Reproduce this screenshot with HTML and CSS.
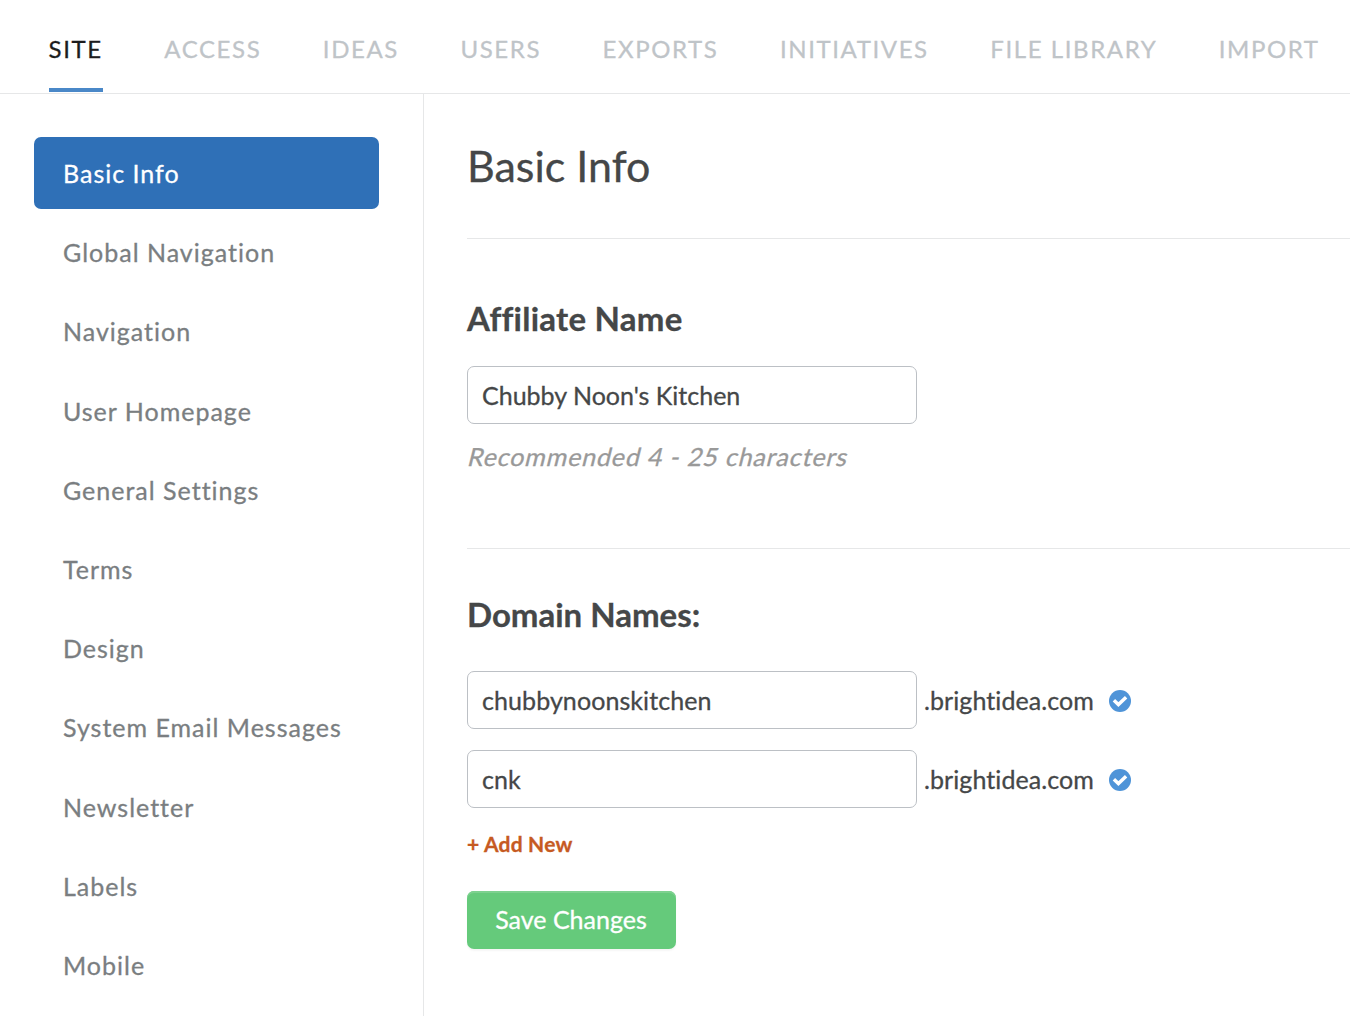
FILE: index.html
```html
<!DOCTYPE html>
<html lang="en">
<head>
<meta charset="utf-8">
<title>Basic Info</title>
<link rel="stylesheet" href="styles.css">
</head>
<body>
<nav class="tabs">
<a class="tab active">SITE</a>
<a class="tab">ACCESS</a>
<a class="tab">IDEAS</a>
<a class="tab">USERS</a>
<a class="tab">EXPORTS</a>
<a class="tab">INITIATIVES</a>
<a class="tab">FILE LIBRARY</a>
<a class="tab">IMPORT</a>
</nav>
<div class="body">
<aside class="side">
<a class="item current">Basic Info</a>
<a class="item">Global Navigation</a>
<a class="item">Navigation</a>
<a class="item">User Homepage</a>
<a class="item">General Settings</a>
<a class="item">Terms</a>
<a class="item">Design</a>
<a class="item">System Email Messages</a>
<a class="item">Newsletter</a>
<a class="item">Labels</a>
<a class="item">Mobile</a>
</aside>
<main class="main">
<h1 class="title">Basic Info</h1>
<section class="section affiliate">
<h2 class="heading">Affiliate Name</h2>
<input class="field" type="text" value="Chubby Noon's Kitchen">
<p class="hint">Recommended 4 - 25 characters</p>
</section>
<section class="section domains">
<h2 class="heading">Domain Names:</h2>
<div class="row">
<input class="field domain" type="text" value="chubbynoonskitchen">
<span class="suffix">.brightidea.com</span>
<svg class="check" viewBox="0 0 22 22"><circle cx="11" cy="11" r="11" fill="#4f94d8"/><path d="M4.9 10.3 9.4 14.6 17.1 7.2" fill="none" stroke="#fff" stroke-width="3.4"/></svg>
</div>
<div class="row">
<input class="field domain" type="text" value="cnk">
<span class="suffix">.brightidea.com</span>
<svg class="check" viewBox="0 0 22 22"><circle cx="11" cy="11" r="11" fill="#4f94d8"/><path d="M4.9 10.3 9.4 14.6 17.1 7.2" fill="none" stroke="#fff" stroke-width="3.4"/></svg>
</div>
<a class="add">+ Add New</a>
<button class="save">Save Changes</button>
</section>
</main>
</div>
</body>
</html>
```
FILE: styles.css
```css
* { box-sizing: border-box; }
body {
  margin: 0;
  height: 1016px;
  overflow: hidden;
  display: flex;
  flex-direction: column;
  background: #fff;
  color: #454748;
  font-family: Lato, "Liberation Sans", sans-serif;
  font-variant-ligatures: none;
  -webkit-text-stroke: .3px currentColor;
}
.tabs {
  display: flex;
  flex: none;
  gap: 61.5px;
  height: 94px;
  padding-left: 48.6px;
  border-bottom: 1px solid #e6e7e8;
}
.tab {
  height: 92px;
  padding-top: 34px;
  font-size: 24px;
  line-height: 29px;
  letter-spacing: 1.6px;
  white-space: nowrap;
  color: #bfc4c8;
}
.tab.active { color: #1d1d1d; border-bottom: 4px solid #4a88c8; }
.body { display: flex; flex: 1; min-height: 0; }
.side {
  flex: none;
  width: 424px;
  padding: 43px 44px 0 34px;
  border-right: 1px solid #e6e7e8;
}
.item {
  display: block;
  height: 72px;
  margin-bottom: 7.2px;
  padding-left: 29px;
  border-radius: 7px;
  font-size: 25px;
  line-height: 72px;
  letter-spacing: 1px;
  white-space: nowrap;
  color: #7a7e81;
}
.item.current { background: #2f70b7; color: #fff; }
.main { flex: 1; padding-left: 43px; }
.title {
  height: 144px;
  margin: 0;
  padding-top: 46px;
  font-size: 43px;
  line-height: 52px;
  font-weight: 400;
}
.section { border-top: 1px solid #e6e7e8; }
.affiliate { height: 310px; padding-top: 59px; }
.affiliate .heading { letter-spacing: .25px; }
.domains { padding-top: 45px; }
.heading {
  margin: 0 0 28px;
  font-size: 33px;
  line-height: 40px;
  font-weight: 700;
}
.domains .heading { margin-bottom: 37px; }
.field {
  display: block;
  flex: none;
  width: 450px;
  height: 58px;
  padding: 0 14px;
  border: 1px solid #bcc0c5;
  border-radius: 7px;
  background: #fff;
  color: inherit;
  font: 25px Lato, sans-serif;
  font-variant-ligatures: none;
  -webkit-text-stroke: inherit;
}
.domain, .suffix { letter-spacing: .08px; }
.hint {
  width: max-content;
  margin: 17px 0 0 2px;
  font-size: 25px;
  line-height: 30px;
  letter-spacing: .85px;
  transform: skewX(-14deg);
  color: #999;
}
.row { display: flex; align-items: center; margin-bottom: 21px; }
.suffix { width: 185px; padding-left: 7px; font-size: 25px; }
.check { width: 22px; height: 22px; margin: 2px 0 0 7px; }
.add {
  display: block;
  margin-top: 23px;
  font-size: 21px;
  line-height: 26px;
  letter-spacing: .2px;
  font-weight: 700;
  color: #c65a22;
}
.save {
  display: block;
  width: 209px;
  height: 58px;
  margin-top: 34px;
  padding: 0 1px 2px 0;
  border: 0;
  border-radius: 7px;
  background: #65ca7b;
  box-shadow: inset 0 2px 0 #7dd18f, 0 2px 2px rgba(0, 0, 0, .04);
  color: #fff;
  font: 25px Lato, sans-serif;
  -webkit-text-stroke: inherit;
}
```
